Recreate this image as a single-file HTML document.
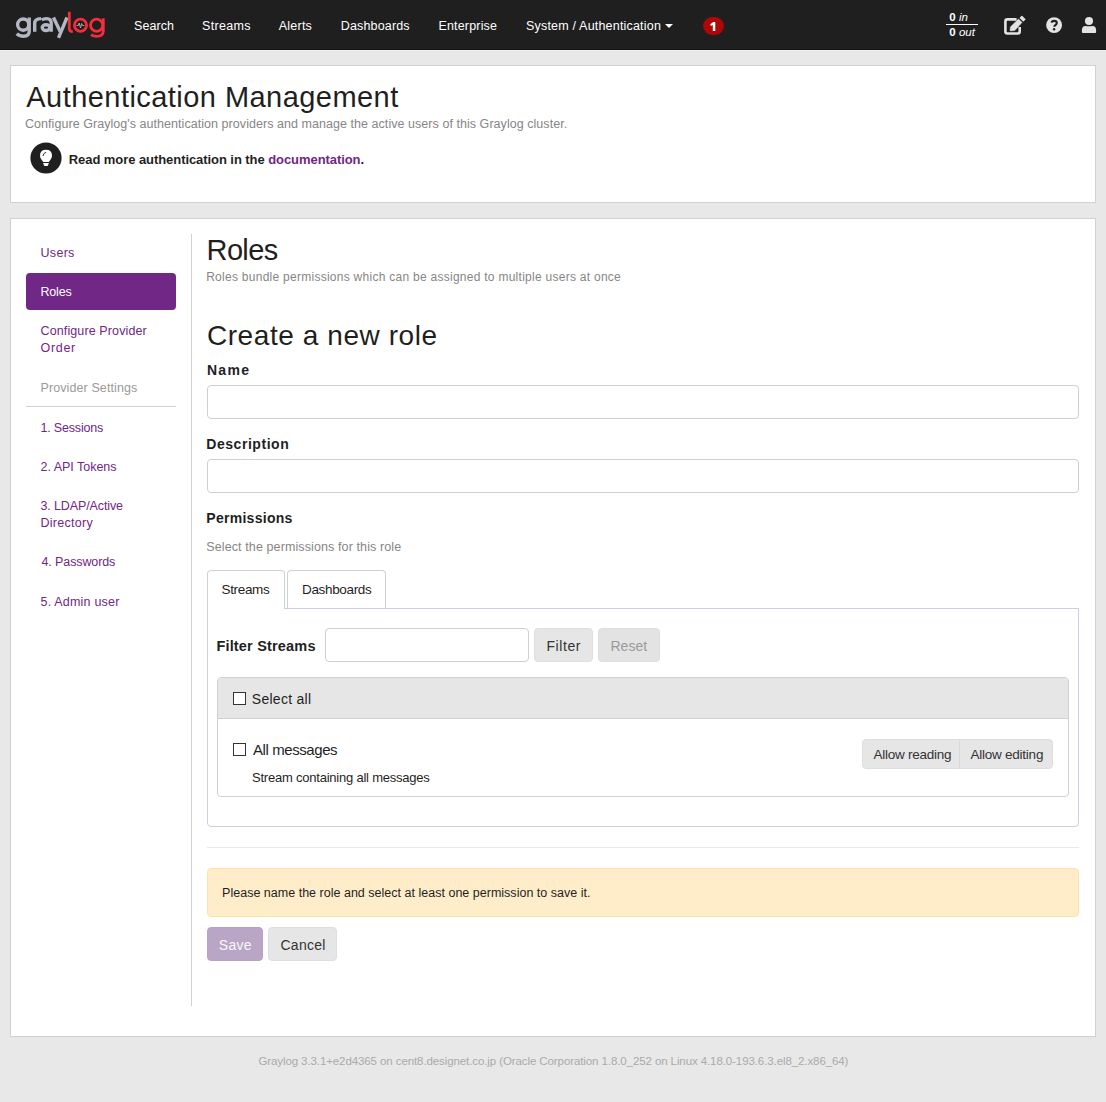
<!DOCTYPE html>
<html><head><meta charset="utf-8"><style>
*{box-sizing:border-box}
html,body{margin:0;padding:0}
body{width:1106px;height:1102px;position:relative;overflow:hidden;background:#e8e8e8;font-family:"Liberation Sans",sans-serif}
.t{position:absolute;white-space:nowrap;line-height:1}
.b{position:absolute}
</style></head><body>
<!-- navbar -->
<div class="b" style="left:0;top:0;width:1106px;height:49px;background:#1f1f1f"></div>
<div class="b" style="left:0;top:49px;width:1106px;height:1px;background:#151515"></div>
<div class="b" style="left:0;top:50px;width:1106px;height:1px;background:#efefef"></div>
<!-- logo -->
<svg class="b" style="left:0;top:0" width="120" height="49" viewBox="0 0 120 49">
  <g fill="none" stroke="#b3b7c4" stroke-width="3.4">
    <circle cx="23.2" cy="24.6" r="5.6"/>
    <path d="M29.2 17.5 V31.5 Q29.2 36.2 23.5 36.2 Q19.2 36.2 16.8 33.6"/>
    <path d="M34.7 31.7 V23.5 Q34.7 18.6 41 18.6"/>
    <path d="M41.6 20 Q43.5 18.6 46.5 18.6 Q51.2 18.6 51.2 23 V31.7"/>
    <ellipse cx="46" cy="27.6" rx="3.8" ry="2.9"/>
    <path d="M53.5 17.5 L60.2 31.5"/>
    <path d="M67 17.5 L58.5 37.8"/>
  </g>
  <g fill="none" stroke="#f52d3a" stroke-width="2.8">
    <path d="M69.3 11.8 V28.5 Q69.3 31.6 72.8 31.6"/>
    <circle cx="80.5" cy="25.2" r="6.1"/>
    <circle cx="96.6" cy="25.2" r="6.1"/>
    <path d="M103.3 18.2 V31 Q103.3 36.4 96.6 36.4 Q93 36.4 91 34.6"/>
  </g>
  <path d="M76.5 25.5 L78.2 25.5 L79.2 23 L80.5 28 L81.6 23.5 L82.5 25.5 L84.3 25.5" fill="none" stroke="#aaa" stroke-width="1"/>
</svg>
<!-- caret -->
<div class="b" style="left:665px;top:24px;width:0;height:0;border-left:4px solid transparent;border-right:4px solid transparent;border-top:4px solid #fff"></div>
<!-- badge -->
<div class="b" style="left:703px;top:17px;width:21px;height:18px;border-radius:9px;background:#ad0707"></div>
<svg class="b" style="left:703px;top:17px" width="21" height="18" viewBox="0 0 21 18"><path d="M9.8 14 V7.9 L8.1 9.1 L7.1 7.6 L10.2 5 H12.3 V14 Z" fill="#fff"/></svg>
<!-- throughput -->
<div class="t" style="left:949.3px;top:11.8px;font-size:11.5px;color:#fff"><b>0</b> <i>in</i></div>
<div class="b" style="left:946px;top:24px;width:32px;height:1px;background:#fff"></div>
<div class="t" style="left:949.3px;top:26.6px;font-size:11.5px;color:#fff"><b>0</b> <i>out</i></div>
<!-- edit icon -->
<svg class="b" style="left:1000px;top:10px" width="30" height="30" viewBox="0 0 30 30">
  <path d="M16.6 9.4 H7.4 Q5.4 9.4 5.4 11.4 V21.5 Q5.4 23.5 7.4 23.5 H17.7 Q19.7 23.5 19.7 21.5 V17" fill="none" stroke="#e3e3e3" stroke-width="2.6"/>
  <path d="M10.3 17.0 L18.5 8.9 L22.0 12.4 L14.8 20.6 L10.1 20.9 Z" fill="#e3e3e3" stroke="#e3e3e3" stroke-width="0.4" stroke-linejoin="round"/>
  <path d="M20.3 7.9 L21.9 6.3 L24.9 9.3 L23.3 10.9 Z" fill="#e3e3e3" stroke="#e3e3e3" stroke-width="1.2" stroke-linejoin="round"/>
</svg>
<!-- help icon -->
<svg class="b" style="left:1040px;top:10px" width="30" height="30" viewBox="0 0 30 30">
  <circle cx="14.1" cy="15.1" r="7.95" fill="#e3e3e3"/>
  <path d="M11.6 12.6 Q11.8 10.9 14.2 10.9 Q16.8 10.9 16.8 13.0 Q16.8 14.2 15.5 15.0 Q14.3 15.7 14.3 16.7" fill="none" stroke="#1f1f1f" stroke-width="2.1"/>
  <circle cx="14.1" cy="19.2" r="1.2" fill="#1f1f1f"/>
</svg>
<!-- user icon -->
<svg class="b" style="left:1076px;top:10px" width="30" height="30" viewBox="0 0 30 30">
  <circle cx="13" cy="11" r="4.05" fill="#e3e3e3"/>
  <path d="M5.9 22 V20.2 Q5.9 15.9 9.6 15.9 Q13 16.7 16.4 15.9 Q20.1 15.9 20.1 20.2 V22 Q20.1 23 19.1 23 H6.9 Q5.9 23 5.9 22 Z" fill="#e3e3e3"/>
</svg>

<!-- panel 1 -->
<div class="b" style="left:10px;top:65px;width:1086px;height:138px;background:#fff;border:1px solid #d1d1d1"></div>
<!-- bulb -->
<svg class="b" style="left:30px;top:142px" width="32" height="32" viewBox="0 0 32 32">
  <circle cx="16" cy="16" r="15.6" fill="#1f1f1f"/>
  <path d="M16 7.8 Q22 7.8 22 13.7 Q22 15.6 20.6 17.6 Q19.3 19.3 18.9 19.9 H13.2 Q12.7 19.3 11.4 17.6 Q10 15.6 10 13.7 Q10 7.8 16 7.8 Z" fill="#fff"/>
  <path d="M13 21 H18.9 L17.9 23.5 Q17.6 24.1 17 24.1 H15 Q14.4 24.1 14.1 23.5 Z" fill="#fff"/>
  <path d="M13 14 Q13.2 11 16.1 10.3" fill="none" stroke="#1f1f1f" stroke-width="0.9"/>
</svg>

<!-- panel 2 -->
<div class="b" style="left:10px;top:218px;width:1086px;height:819px;background:#fff;border:1px solid #d1d1d1"></div>
<div class="b" style="left:191px;top:234px;width:1px;height:772px;background:#d1d1d1"></div>
<div class="b" style="left:26px;top:273px;width:150px;height:37px;border-radius:4px;background:#702785"></div>
<div class="b" style="left:26px;top:406px;width:150px;height:1px;background:#d1d1d1"></div>

<!-- inputs -->
<div class="b" style="left:207px;top:385px;width:872px;height:34px;border:1px solid #cfcfcf;border-radius:4px"></div>
<div class="b" style="left:207px;top:459px;width:872px;height:34px;border:1px solid #cfcfcf;border-radius:4px"></div>

<!-- tabs -->
<div class="b" style="left:207px;top:608px;width:872px;height:219px;border:1px solid #c9d0e6;border-radius:0 0 4px 4px"></div>
<div class="b" style="left:287px;top:570px;width:99px;height:39px;border:1px solid #d1d1d1;border-bottom:1px solid #c9d0e6;border-radius:4px 4px 0 0;background:#fff"></div>
<div class="b" style="left:207px;top:570px;width:78px;height:39px;border:1px solid #c9d0e6;border-bottom:none;border-radius:4px 4px 0 0;background:#fff"></div>

<!-- filter -->
<div class="b" style="left:325px;top:628px;width:204px;height:34px;border:1px solid #cfcfcf;border-radius:4px"></div>
<div class="b" style="left:534px;top:628px;width:59px;height:34px;border:1px solid #dedede;border-radius:4px;background:#e6e6e6"></div>
<div class="b" style="left:598px;top:628px;width:62px;height:34px;border:1px solid #dedede;border-radius:4px;background:#e3e3e3"></div>

<!-- list group -->
<div class="b" style="left:217px;top:677px;width:852px;height:120px;border:1px solid #d1d1d1;border-radius:4px;overflow:hidden">
  <div style="position:absolute;left:0;top:0;width:850px;height:41px;background:#e6e6e6;border-bottom:1px solid #d1d1d1"></div>
</div>
<div class="b" style="left:233px;top:692px;width:13px;height:13px;border:1px solid #333;background:#fff"></div>
<div class="b" style="left:233px;top:743px;width:13px;height:13px;border:1px solid #333;background:#fff"></div>
<div class="b" style="left:862px;top:739px;width:191px;height:30px;border:1px solid #dedede;border-radius:4px;background:#e6e6e6"></div>
<div class="b" style="left:959px;top:739px;width:1px;height:30px;background:#d9d9d9"></div>

<!-- hr / alert / buttons -->
<div class="b" style="left:207px;top:847px;width:872px;height:1px;background:#eaeaea"></div>
<div class="b" style="left:207px;top:868px;width:872px;height:49px;border:1px solid #fde4a6;border-radius:4px;background:#ffedca"></div>
<div class="b" style="left:207px;top:927px;width:56px;height:34px;border:1px solid #b8a1c4;border-radius:4px;background:#b9a5c5"></div>
<div class="b" style="left:268px;top:927px;width:69px;height:34px;border:1px solid #dedede;border-radius:4px;background:#e6e6e6"></div>

<div id="n1" class="t" style="left:134.00px;top:20.32px;font-size:12.5px;font-weight:400;color:#fff;letter-spacing:0.080px">Search</div>
<div id="n2" class="t" style="left:202.10px;top:20.32px;font-size:12.5px;font-weight:400;color:#fff;letter-spacing:0.300px">Streams</div>
<div id="n3" class="t" style="left:278.70px;top:20.32px;font-size:12.5px;font-weight:400;color:#fff;letter-spacing:0.240px">Alerts</div>
<div id="n4" class="t" style="left:340.80px;top:20.32px;font-size:12.5px;font-weight:400;color:#fff;letter-spacing:0.156px">Dashboards</div>
<div id="n5" class="t" style="left:438.40px;top:20.32px;font-size:12.5px;font-weight:400;color:#fff;letter-spacing:0.178px">Enterprise</div>
<div id="n6" class="t" style="left:526.00px;top:20.32px;font-size:12.5px;font-weight:400;color:#fff;letter-spacing:0.191px">System / Authentication</div>
<div id="h1" class="t" style="left:26.30px;top:83.05px;font-size:29px;font-weight:400;color:#1f1f1f;letter-spacing:0.450px">Authentication Management</div>
<div id="h1s" class="t" style="left:25.00px;top:117.72px;font-size:12.5px;font-weight:400;color:#868686;letter-spacing:0.050px">Configure Graylog's authentication providers and manage the active users of this Graylog cluster.</div>
<div id="doc" class="t" style="left:68.80px;top:152.79px;font-size:13px;font-weight:700;color:#1f1f1f;letter-spacing:-0.067px">Read more authentication in the <span style="color:#702785">documentation</span>.</div>
<div id="s1" class="t" style="left:40.50px;top:247.02px;font-size:12.5px;font-weight:400;color:#702785;letter-spacing:0.300px">Users</div>
<div id="s2" class="t" style="left:40.50px;top:286.02px;font-size:12.5px;font-weight:400;color:#fff;letter-spacing:-0.200px">Roles</div>
<div id="s3" class="t" style="left:40.50px;top:325.42px;font-size:12.5px;font-weight:400;color:#702785;letter-spacing:0.118px">Configure Provider</div>
<div id="s3b" class="t" style="left:40.50px;top:342.02px;font-size:12.5px;font-weight:400;color:#702785;letter-spacing:0.700px">Order</div>
<div id="s4" class="t" style="left:40.50px;top:382.32px;font-size:12.5px;font-weight:400;color:#9a9a9a;letter-spacing:0.100px">Provider Settings</div>
<div id="s5" class="t" style="left:40.50px;top:422.22px;font-size:12.5px;font-weight:400;color:#702785;letter-spacing:-0.180px">1. Sessions</div>
<div id="s6" class="t" style="left:40.50px;top:461.42px;font-size:12.5px;font-weight:400;color:#702785;letter-spacing:-0.017px">2. API Tokens</div>
<div id="s7" class="t" style="left:40.50px;top:500.32px;font-size:12.5px;font-weight:400;color:#702785;letter-spacing:-0.123px">3. LDAP/Active</div>
<div id="s7b" class="t" style="left:40.50px;top:517.22px;font-size:12.5px;font-weight:400;color:#702785;letter-spacing:0.275px">Directory</div>
<div id="s8" class="t" style="left:41.50px;top:555.82px;font-size:12.5px;font-weight:400;color:#702785;letter-spacing:-0.109px">4. Passwords</div>
<div id="s9" class="t" style="left:40.50px;top:595.72px;font-size:12.5px;font-weight:400;color:#702785;letter-spacing:0.200px">5. Admin user</div>
<div id="r1" class="t" style="left:206.60px;top:236.25px;font-size:29px;font-weight:400;color:#1f1f1f;letter-spacing:-0.650px">Roles</div>
<div id="r1s" class="t" style="left:206.20px;top:271.44px;font-size:12px;font-weight:400;color:#868686;letter-spacing:0.268px">Roles bundle permissions which can be assigned to multiple users at once</div>
<div id="h2" class="t" style="left:206.90px;top:322.29px;font-size:28px;font-weight:400;color:#1f1f1f;letter-spacing:0.575px">Create a new role</div>
<div id="l1" class="t" style="left:206.90px;top:363.25px;font-size:14px;font-weight:700;color:#1f1f1f;letter-spacing:1.333px">Name</div>
<div id="l2" class="t" style="left:206.30px;top:437.05px;font-size:14px;font-weight:700;color:#1f1f1f;letter-spacing:0.540px">Description</div>
<div id="l3" class="t" style="left:206.30px;top:511.15px;font-size:14px;font-weight:700;color:#1f1f1f;letter-spacing:0.280px">Permissions</div>
<div id="l3s" class="t" style="left:206.30px;top:540.92px;font-size:12.5px;font-weight:400;color:#868686;letter-spacing:0.109px">Select the permissions for this role</div>
<div id="tb1" class="t" style="left:221.60px;top:582.57px;font-size:13.5px;font-weight:400;color:#1f1f1f;letter-spacing:-0.367px">Streams</div>
<div id="tb2" class="t" style="left:302.00px;top:582.57px;font-size:13.5px;font-weight:400;color:#1f1f1f;letter-spacing:-0.333px">Dashboards</div>
<div id="fs" class="t" style="left:216.40px;top:639.12px;font-size:14.5px;font-weight:700;color:#1f1f1f;letter-spacing:0.185px">Filter Streams</div>
<div id="fb" class="t" style="left:546.50px;top:639.05px;font-size:14px;font-weight:400;color:#333;letter-spacing:0.560px">Filter</div>
<div id="rb" class="t" style="left:610.50px;top:639.05px;font-size:14px;font-weight:400;color:#9a9a9a;letter-spacing:0.000px">Reset</div>
<div id="sa" class="t" style="left:251.80px;top:691.65px;font-size:14px;font-weight:400;color:#1f1f1f;letter-spacing:0.267px">Select all</div>
<div id="am" class="t" style="left:253.00px;top:742.40px;font-size:15px;font-weight:400;color:#1f1f1f;letter-spacing:-0.418px">All messages</div>
<div id="amd" class="t" style="left:252.00px;top:770.79px;font-size:13px;font-weight:400;color:#1f1f1f;letter-spacing:-0.221px">Stream containing all messages</div>
<div id="ar" class="t" style="left:873.40px;top:747.87px;font-size:13.5px;font-weight:400;color:#333;letter-spacing:-0.250px">Allow reading</div>
<div id="ae" class="t" style="left:970.40px;top:747.87px;font-size:13.5px;font-weight:400;color:#333;letter-spacing:-0.233px">Allow editing</div>
<div id="al" class="t" style="left:222.10px;top:887.32px;font-size:12.5px;font-weight:400;color:#1f1f1f;letter-spacing:0.012px">Please name the role and select at least one permission to save it.</div>
<div id="sv" class="t" style="left:218.80px;top:938.15px;font-size:14px;font-weight:400;color:#faf8fb;letter-spacing:0.267px">Save</div>
<div id="cn" class="t" style="left:280.50px;top:938.15px;font-size:14px;font-weight:400;color:#333;letter-spacing:0.240px">Cancel</div>
<div id="ft" class="t" style="left:258.40px;top:1056.16px;font-size:11.5px;font-weight:400;color:#aaaaaa;letter-spacing:-0.095px">Graylog 3.3.1+e2d4365 on cent8.designet.co.jp (Oracle Corporation 1.8.0_252 on Linux 4.18.0-193.6.3.el8_2.x86_64)</div>
</body></html>
